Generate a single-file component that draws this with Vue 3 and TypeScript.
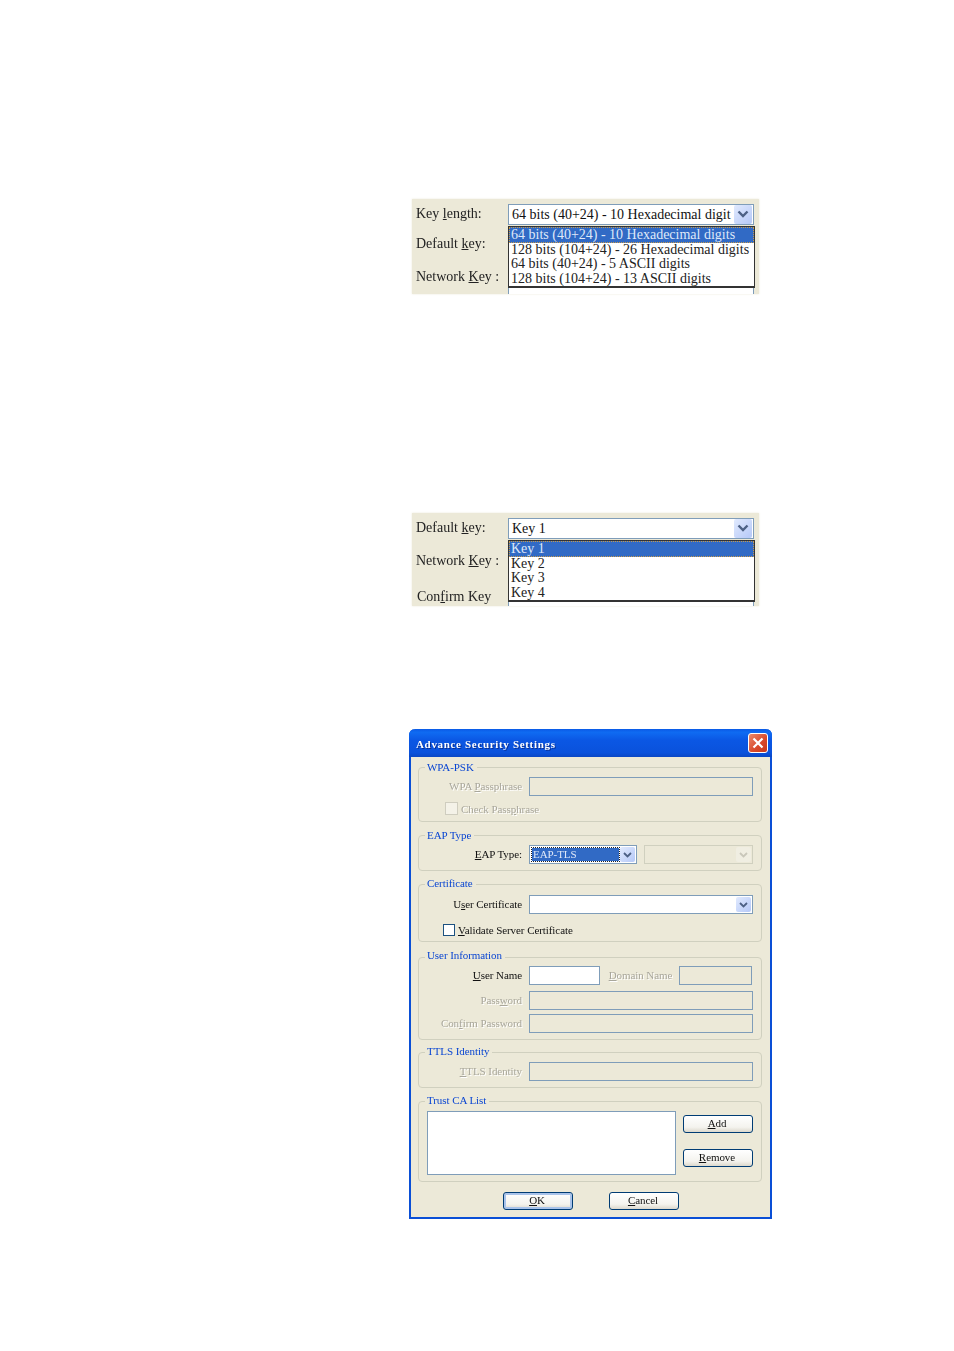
<script setup lang="ts">
const lengthOptions: string[] = [
  '64 bits (40+24) - 10 Hexadecimal digits',
  '128 bits (104+24) - 26 Hexadecimal digits',
  '64 bits (40+24) - 5 ASCII digits',
  '128 bits (104+24) - 13 ASCII digits',
]
const keyOptions: string[] = ['Key 1', 'Key 2', 'Key 3', 'Key 4']
</script>

<template>
  <div class="page">
    <section class="figure fig-a">
      <div class="labels">
        <div class="lab l1">Key <u>l</u>ength:</div>
        <div class="lab l2">Default <u>k</u>ey:</div>
        <div class="lab l3">Network <u>K</u>ey :</div>
      </div>
      <div class="field-col">
        <div class="big-select">
          <span class="big-value">64 bits (40+24) - 10 Hexadecimal digit</span>
          <span class="big-arrow">
            <svg width="12" height="9" viewBox="0 0 12 9"><path d="M1.5 1.5 6 6l4.5-4.5" fill="none" stroke="#4d6185" stroke-width="2.4" /></svg>
          </span>
        </div>
        <div class="under"></div>
        <ul class="list">
          <li v-for="(o, i) in lengthOptions" :key="o" class="opt" :class="{ sel: i === 0 }">{{ o }}</li>
        </ul>
      </div>
    </section>

    <section class="figure fig-b">
      <div class="labels">
        <div class="lab l1">Default <u>k</u>ey:</div>
        <div class="lab l2b">Network <u>K</u>ey :</div>
        <div class="lab l3b">Con<u>f</u>irm Key</div>
      </div>
      <div class="field-col">
        <div class="big-select">
          <span class="big-value">Key 1</span>
          <span class="big-arrow">
            <svg width="12" height="9" viewBox="0 0 12 9"><path d="M1.5 1.5 6 6l4.5-4.5" fill="none" stroke="#4d6185" stroke-width="2.4" /></svg>
          </span>
        </div>
        <div class="under"></div>
        <ul class="list">
          <li v-for="(o, i) in keyOptions" :key="o" class="opt" :class="{ sel: i === 0 }">{{ o }}</li>
        </ul>
      </div>
    </section>

    <section class="dialog">
      <header class="titlebar">
        <span class="title">Advance Security Settings</span>
        <span class="close">
          <svg width="12" height="12" viewBox="0 0 12 12"><path d="M1.5 1.5l9 9M10.5 1.5l-9 9" stroke="#fff" stroke-width="2.2" fill="none" /></svg>
        </span>
      </header>
      <div class="body">
        <div class="group g-wpa">
          <span class="legend">WPA-PSK</span>
          <div class="row">
            <label class="cap off">WPA <u>P</u>assphrase</label>
            <div class="input off-input"></div>
          </div>
          <div class="check-row cr-wpa">
            <span class="check off-check"></span>
            <span class="off">Check Pass<u>p</u>hrase</span>
          </div>
        </div>

        <div class="group g-eap">
          <span class="legend">EAP Type</span>
          <div class="row">
            <label class="cap"><u>E</u>AP Type:</label>
            <div class="pair">
              <div class="select eap">
                <span class="focus-value">EAP-TLS</span>
                <span class="arrow">
                  <svg width="9" height="6" viewBox="0 0 9 6"><path d="M1 1l3.5 3.5L8 1" fill="none" stroke="#4d6185" stroke-width="1.8" /></svg>
                </span>
              </div>
              <div class="select eap2">
                <span class="arrow arrow-off">
                  <svg width="9" height="6" viewBox="0 0 9 6"><path d="M1 1l3.5 3.5L8 1" fill="none" stroke="#c9c7ba" stroke-width="1.8" /></svg>
                </span>
              </div>
            </div>
          </div>
        </div>

        <div class="group g-cert">
          <span class="legend">Certificate</span>
          <div class="row">
            <label class="cap">U<u>s</u>er Certificate</label>
            <div class="select full">
              <span class="arrow">
                <svg width="9" height="6" viewBox="0 0 9 6"><path d="M1 1l3.5 3.5L8 1" fill="none" stroke="#4d6185" stroke-width="1.8" /></svg>
              </span>
            </div>
          </div>
          <div class="check-row cr-cert">
            <span class="check check-small"></span>
            <span><u>V</u>alidate Server Certificate</span>
          </div>
        </div>

        <div class="group g-user">
          <span class="legend">User Information</span>
          <div class="row">
            <label class="cap"><u>U</u>ser Name</label>
            <div class="pair between">
              <div class="input short white"></div>
              <label class="off domain"><u>D</u>omain Name</label>
              <div class="input domain-input off-input"></div>
            </div>
          </div>
          <div class="row r6">
            <label class="cap off">Pass<u>w</u>ord</label>
            <div class="input off-input"></div>
          </div>
          <div class="row r4">
            <label class="cap off">Con<u>f</u>irm Password</label>
            <div class="input off-input"></div>
          </div>
        </div>

        <div class="group g-ttls">
          <span class="legend">TTLS Identity</span>
          <div class="row">
            <label class="cap off"><u>T</u>TLS Identity</label>
            <div class="input off-input"></div>
          </div>
        </div>

        <div class="group g-trust">
          <span class="legend">Trust CA List</span>
          <div class="trust">
            <div class="ca-list"></div>
            <div class="side">
              <button class="btn" type="button"><u>A</u>dd</button>
              <button class="btn" type="button"><u>R</u>emove</button>
            </div>
          </div>
        </div>

        <div class="actions">
          <button class="btn default" type="button"><u>O</u>K</button>
          <button class="btn" type="button"><u>C</u>ancel</button>
        </div>
      </div>
    </section>
  </div>
</template>

<style>
html, body { margin: 0; background: #fff; }
</style>

<style scoped>
.page {
  height: 1351px;
  padding-top: 199px;
  box-sizing: border-box;
  background: #fff;
  font-family: "Liberation Serif", "Times New Roman", serif;
  color: #111;
  overflow: hidden;
}
.figure {
  display: flex;
  width: 347px;
  margin-left: 412px;
  background: #ece9d8;
  box-shadow: 0 0 2px #ece9d8;
  font-size: 14px;
  line-height: 18px;
  filter: blur(0.3px);
}
.fig-a { height: 95px; }
.fig-b { height: 93px; margin-top: 219px; }
.labels { width: 96px; padding: 6px 0 0 4px; box-sizing: border-box; flex: none; color: #222; }
.lab { white-space: nowrap; }
.l2 { margin-top: 12px; }
.l3 { margin-top: 15px; }
.l2b { margin-top: 15px; }
.l3b { margin-top: 18px; margin-left: 1px; }
.field-col {
  position: relative;
  width: 246px;
  padding-top: 5px;
  display: flex;
  flex-direction: column;
}
.big-select {
  height: 21px;
  box-sizing: border-box;
  border: 1px solid #7f9db9;
  background: #fff;
  display: flex;
  align-items: center;
  justify-content: space-between;
  padding: 0 1px 0 3px;
  flex: none;
}
.big-value { white-space: nowrap; }
.big-arrow {
  width: 18px;
  height: 19px;
  flex: none;
  background: linear-gradient(135deg, #e1eafe, #b5c8f7);
  border-radius: 2px;
  display: flex;
  align-items: center;
  justify-content: center;
}
.under {
  flex: 1;
  margin-top: 2px;
  background: #fff;
  border: 1px solid #7f9db9;
  border-bottom: 0;
}
.list {
  position: absolute;
  left: 0;
  top: 27px;
  width: 247px;
  box-sizing: border-box;
  margin: 0;
  padding: 0;
  list-style: none;
  background: #fff;
  border: 1px solid #333;
  border-bottom-width: 2px;
  color: #222;
}
.opt { height: 14.6px; line-height: 14.6px; padding-left: 2px; white-space: nowrap; }
.opt.sel {
  background: #316ac5;
  color: #dfe8f8;
  outline: 1px dotted #c79a4a;
  outline-offset: -1px;
  padding-top: 1px;
}

.dialog {
  width: 363px;
  height: 490px;
  margin: 123px 0 0 409px;
  box-sizing: border-box;
  background: #ece9d8;
  border: 2px solid #0a4fd6;
  border-top: 0;
  border-radius: 6px 6px 0 0;
  font-size: 11px;
  line-height: 14px;
  letter-spacing: -0.07px;
  color: #111;
  filter: blur(0.25px);
}
.titlebar {
  height: 28px;
  margin: 0 -2px;
  padding: 0 4px 0 7px;
  display: flex;
  align-items: center;
  justify-content: space-between;
  background: linear-gradient(180deg, #0a5ae6 0%, #0f6bf2 12%, #0b57e4 40%, #0a52dc 85%, #0a47c4 100%);
  border-radius: 6px 6px 0 0;
}
.title {
  padding-top: 1px;
  color: #fff;
  font-weight: 700;
  font-size: 11px;
  letter-spacing: 0.67px;
  text-shadow: 1px 1px 0 #0a2f90;
}
.close {
  width: 18px;
  height: 18px;
  border: 1px solid #fff;
  border-radius: 3px;
  background: linear-gradient(135deg, #ea8a6c, #d8482a 60%, #c8391c);
  display: flex;
  align-items: center;
  justify-content: center;
}
.body { padding: 10px 8px 0 7px; }
.group {
  position: relative;
  width: 344px;
  box-sizing: border-box;
  border: 1px solid #d0d0bf;
  border-radius: 4px;
}
.legend {
  position: absolute;
  left: 6px;
  top: -8px;
  padding: 0 3px 0 2px;
  background: #ece9d8;
  color: #0a46d2;
  white-space: nowrap;
  font-size: 11px;
}
.g-wpa { padding: 9px 0 6px; }
.g-eap { margin-top: 13px; padding: 9px 0 6px; }
.g-cert { margin-top: 13px; padding: 10px 0 5px; }
.g-cert .legend, .g-ttls .legend, .g-trust .legend { top: -9px; }
.g-user { margin-top: 15px; padding: 8px 0 6px; }
.g-user .legend { top: -10px; }
.g-ttls { margin-top: 12px; padding: 9px 0 6px; }
.g-trust { margin-top: 13px; padding: 9px 0 6px; }
.row {
  display: grid;
  grid-template-columns: 103px 224px;
  column-gap: 7px;
  align-items: center;
}
.r6 { margin-top: 6px; }
.r4 { margin-top: 4px; }
.cap { text-align: right; white-space: nowrap; padding-bottom: 2px; }
.off { color: #a9a79b; text-shadow: 1px 1px 0 #fff; white-space: nowrap; }
.domain { padding-bottom: 2px; }
.input {
  height: 19px;
  box-sizing: border-box;
  border: 1px solid #7f9db9;
}
.white { background: #fff; }
.check-row { display: flex; align-items: center; white-space: nowrap; height: 13px; }
.check {
  width: 13px;
  height: 13px;
  box-sizing: border-box;
  flex: none;
  background: #fff;
  border: 1px solid #1c5180;
}
.check-small { width: 12px; height: 12px; }
.off-check { border-color: #cfcdbf; background: #f4f2e8; }
.cr-wpa { margin: 6px 0 0 26px; gap: 3px; }
.cr-cert { margin: 10px 0 0 24px; gap: 3px; height: 12px; }
.pair { display: flex; align-items: center; }
.select {
  height: 19px;
  box-sizing: border-box;
  border: 1px solid #7f9db9;
  background: #fff;
  display: flex;
  align-items: center;
  justify-content: flex-end;
  padding-right: 1px;
}
.eap { width: 108px; justify-content: space-between; padding-left: 2px; }
.eap2 {
  width: 109px;
  margin-left: 7px;
  background: #ece9d8;
  border-color: #d0d0bf;
}
.full { width: 224px; }
.focus-value {
  width: 86px;
  height: 13px;
  line-height: 13px;
  padding-left: 1px;
  background: #316ac5;
  color: #dfe8f8;
  outline: 1px dotted #222;
}
.arrow {
  width: 15px;
  height: 15px;
  flex: none;
  background: linear-gradient(135deg, #e1eafe, #b5c8f7);
  border-radius: 2px;
  display: flex;
  align-items: center;
  justify-content: center;
}
.arrow-off { background: #f0eee2; }
.between { justify-content: space-between; width: 223px; }
.short { width: 71px; }
.domain { margin-left: 9px; margin-right: 7px; }
.domain-input { width: 73px; }
.trust {
  display: flex;
  margin-left: 8px;
  gap: 7px;
}
.ca-list {
  width: 249px;
  height: 64px;
  box-sizing: border-box;
  background: #fff;
  border: 1px solid #7f9db9;
}
.side {
  width: 70px;
  padding-top: 4px;
  display: flex;
  flex-direction: column;
  gap: 16px;
}
.btn {
  width: 70px;
  height: 18px;
  padding: 0 2px 2px 0;
  box-sizing: border-box;
  font: inherit;
  letter-spacing: inherit;
  color: #111;
  border: 1px solid #003c74;
  border-radius: 3px;
  background: linear-gradient(180deg, #fff 0%, #f4f3ee 70%, #dcd8cc 100%);
}
.btn.default { box-shadow: inset 0 0 0 2px #a9c3ea; }
.actions {
  display: flex;
  justify-content: flex-start;
  gap: 36px;
  margin: 10px 0 0 85px;
}
</style>
